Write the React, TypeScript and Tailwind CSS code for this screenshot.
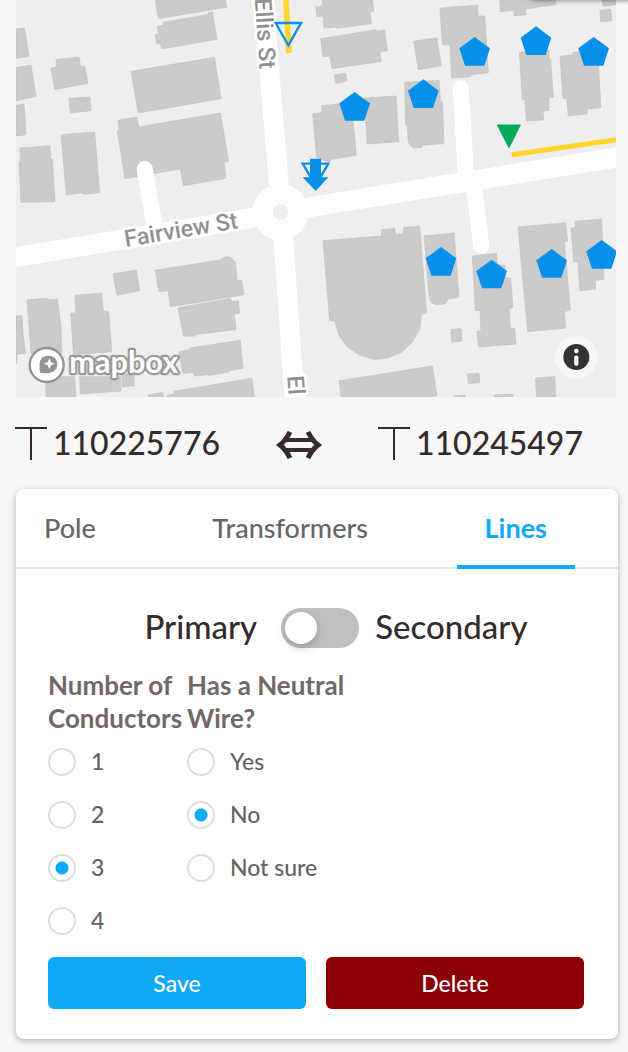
import { useState } from "react";

type Point = [number, number];

const buildings: { x: number; y: number; shapes: string[] }[] = [
  {
    x: 0,
    y: 0,
    shapes: [
      "466,0 475,56 680,22 676,0",
      "472,79 491,75 491,67 622,44 626,38 637,35 651,118 485,147 481,131 470,131 465,104 475,101",
      "393,214 644,172 663,296 415,339",
      "354,361 411,351 416,381 661,339 686,484 672,486 678,535 550,557 541,507 375,536 352,393 357,391",
      "48,87 74,84 87,169 48,175",
      "48,203 93,195 108,290 48,302",
      "48,316 72,312 78,404 48,408",
      "168,179 237,171 241,197 254,199 264,250 164,269 153,205 170,201",
      "207,295 270,291 273,332 211,339",
      "60,444 150,437 152,476 157,478 165,605 63,607 57,486 61,484",
      "183,404 284,396 299,578 252,583 245,579 199,584",
    ],
  },
  {
    x: 942,
    y: 0,
    shapes: [
      "25,0 176,0 179,34 168,37 172,71 69,85 67,81 30,84 27,48 9,50 5,20 25,18",
      "20,116 186,89 189,94 212,90 220,152 197,156 202,184 54,206 48,168 27,170",
      "61,225 95,219 99,244 66,250",
      "299,124 368,113 382,197 313,209",
      "378,24 491,15 492,48 512,48 523,218 471,225 470,230 413,234 408,134 385,134",
      "557,0 725,0 725,14 635,27 636,44 601,48 600,31 559,35",
      "864,0 906,0 906,14 868,19",
      "858,31 890,27 894,62 860,66",
      "616,157 705,150 705,177 710,178 718,292 704,294 705,331 687,334 689,360 637,363 633,300 625,298",
      "738,169 777,165 777,157 850,151 861,323 819,327 819,342 763,347 758,296 747,294",
      "-4,342 24,338 23,318 112,306 127,466 54,478 46,486 8,473",
      "152,294 246,288 254,425 159,432",
      "272,247 375,241 379,302 385,305 390,431 323,436 323,443 295,443 283,427 279,377 275,374",
    ],
  },
  {
    x: 0,
    y: 600,
    shapes: [
      "339,222 409,210 419,272 351,286",
      "466,211 660,180 675,171 690,171 706,187 711,242 725,242 732,284 511,320 504,272 476,275",
      "534,323 690,296 696,304 715,303 719,340 703,343 708,389 590,403 586,408 551,409",
      "538,454 569,449 569,444 721,421 729,505 687,512 686,517 628,526 623,524 584,528 580,517 548,520",
      "81,300 142,295 145,299 173,298 183,380 185,460 93,460",
      "225,286 305,279 310,333 326,334 335,455 221,464 212,340 228,338",
      "48,348 66,347 69,404 77,460 48,463",
      "48,463 51,463 51,490 48,492",
      "137,530 224,530 228,591 138,591",
      "239,530 361,530 363,573 241,582",
      "365,522 402,522 403,557 367,561",
      "444,585 487,577 491,591 446,591",
      "500,587 522,582 522,574 755,535 763,591 500,591",
    ],
  },
  {
    x: 942,
    y: 600,
    shapes: [
      "27,122 202,108 202,89 242,85 244,104 269,101 269,82 317,79 338,341 322,343 318,385 296,425 262,457 222,474 180,478 135,464 98,439 74,404 62,363 47,361",
      "330,108 420,99 435,293 405,296 393,311 368,315 353,308 346,296",
      "475,168 547,160 550,193 572,196 574,232 590,235 597,323 585,326 589,384 602,385 606,432 493,441 489,395 501,392 498,332 484,331",
      "612,81 755,68 761,122 751,126 769,330 751,335 755,384 641,395",
      "783,64 863,57 870,238 844,242 845,268 798,272 792,187 779,184 771,85 784,82",
      "411,388 441,386 444,423 413,426",
      "461,522 495,519 497,547 463,551",
      "76,542 355,498 369,587 340,591 81,591",
      "664,534 722,530 725,591 668,591",
      "420,588 453,585 453,591 420,591",
      "541,585 596,582 598,591 541,591",
    ],
  },
];

const homes: Point[] = [
  [1064, 276],
  [1270, 238],
  [1424, 111],
  [1608, 79],
  [1781, 111],
  [1323, 741],
  [1475, 779],
  [1655, 747],
  [1805, 720],
];

function StreetMap() {
  return (
    <svg
      viewBox="48 0 1800 1191"
      className="block h-auto w-full bg-[#eeeeee]"
      role="img"
      aria-label="Map of Ellis St and Fairview St"
    >
      <g fill="#cbcbcb" stroke="#c1c1c1" strokeWidth="2">
        {buildings.map((group) => (
          <g key={`${group.x}-${group.y}`} transform={`translate(${group.x} ${group.y})`}>
            {group.shapes.map((points) => (
              <polygon key={points} points={points} />
            ))}
          </g>
        ))}
      </g>

      <g fill="none" stroke="#ffffff" strokeLinejoin="round">
        <path d="M790 -10 L807 200 L850 715 L884 1200" strokeWidth="59" />
        <path d="M38 773 L840 640 L942 619 L1858 471" strokeWidth="60" />
        <path d="M434 507 L466 690" strokeWidth="48" strokeLinecap="round" />
        <path d="M1382 264 L1398 530 L1424 575 L1444 738" strokeWidth="48" strokeLinecap="round" />
      </g>
      <circle cx="841" cy="636" r="84" fill="#ffffff" />
      <circle cx="841" cy="636" r="23" fill="#eeeeee" />

      <g
        className="font-[Roboto,sans-serif] font-medium"
        fill="#919191"
        stroke="#ffffff"
        strokeWidth="16"
        strokeLinejoin="round"
        paintOrder="stroke"
        fontSize="70"
      >
        <text transform="translate(779 208) rotate(86)" textAnchor="end">
          Ellis St
        </text>
        <text transform="translate(377 741) rotate(-9.5)">Fairview St</text>
        <text transform="translate(862 1128) rotate(86)">El</text>
      </g>

      <g fill="none" stroke="#ffd52e">
        <path d="M857 -5 L867 159" strokeWidth="17" />
        <path d="M1535 464 L1858 418" strokeWidth="15" />
      </g>

      <polygon points="827,69 903,69 865,136" fill="none" stroke="#0790ea" strokeWidth="7" />
      <polygon points="908,491 985,491 947,557" fill="none" stroke="#0790ea" strokeWidth="7" />
      <polygon points="930,476 963,476 963,532 985,532 947,573 908,532 930,532" fill="#0790ea" />
      <polygon
        points="1492,375 1561,375 1527,443"
        fill="#04aa5b"
        stroke="#04aa5b"
        strokeWidth="3"
        strokeLinejoin="round"
      />
      {homes.map(([x, y]) => (
        <polygon
          key={`${x}-${y}`}
          transform={`translate(${x} ${y})`}
          points="0,0 46,34 29,86 -29,86 -46,34"
          fill="#0790ea"
        />
      ))}

      <circle cx="140" cy="1095" r="51" fill="#ffffff" stroke="#929292" strokeWidth="7" />
      <path
        d="M121 1119 C114 1089 120 1068 143 1067 C160 1067 172 1077 172 1093 C171 1116 149 1123 121 1119 Z"
        fill="#949494"
      />
      <path d="M148 1075 L153 1086 L164 1091 L153 1096 L148 1107 L143 1096 L132 1091 L143 1086 Z" fill="#ffffff" />
      <text
        x="208"
        y="1119"
        className="font-[Lato,sans-serif] font-bold"
        fontSize="92"
        fill="#ffffff"
        stroke="#999999"
        strokeWidth="13"
        strokeLinejoin="round"
        paintOrder="stroke"
      >
        mapbox
      </text>

      <circle cx="1729" cy="1072" r="64" fill="#f7f7f7" />
      <circle cx="1729" cy="1071" r="39" fill="#333333" />
      <circle cx="1729" cy="1053" r="7" fill="#f7f7f7" />
      <path d="M1729 1073 V1091" stroke="#f7f7f7" strokeWidth="13" strokeLinecap="round" />
    </svg>
  );
}

function PoleNumber({ value }: { value: string }) {
  return (
    <div className="flex items-center gap-[6px]">
      <svg viewBox="0 0 32 34" className="h-[34px] w-8" fill="none" stroke="#352b2b" aria-hidden="true">
        <path d="M0 2 H32" strokeWidth="2" />
        <path d="M16 2 V34" strokeWidth="2" />
      </svg>
      <span className="text-[32px] leading-9 font-medium">{value}</span>
    </div>
  );
}

interface ChoiceProps {
  legend: [string, string];
  name: string;
  options: string[];
  value: string;
  onChange: (value: string) => void;
}

function Choice({ legend, name, options, value, onChange }: ChoiceProps) {
  return (
    <fieldset className="w-[139px]">
      <legend className="text-[26px] leading-[33px] font-bold whitespace-nowrap text-[#726868]">
        {legend[0]}
        <br />
        {legend[1]}
      </legend>
      {options.map((option) => (
        <label
          key={option}
          className="flex h-[53px] items-center gap-[15px] text-[23px] font-medium whitespace-nowrap text-[#636363]"
        >
          <input
            type="radio"
            name={name}
            checked={value === option}
            onChange={() => onChange(option)}
            className="size-7 appearance-none rounded-full border-2 border-[#dedede] bg-white bg-[radial-gradient(circle,#0fa9fa_6px,transparent_7px)] bg-size-[0px] bg-center bg-no-repeat checked:bg-size-[24px]"
          />
          {option}
        </label>
      ))}
    </fieldset>
  );
}

const tabs = ["Pole", "Transformers", "Lines"];

export default function App() {
  const [tab, setTab] = useState("Lines");
  const [secondary, setSecondary] = useState(false);
  const [conductors, setConductors] = useState("3");
  const [neutral, setNeutral] = useState("No");

  return (
    <div className="relative min-h-screen overflow-hidden bg-[#f7f7f7] font-[Lato,sans-serif] text-[#352b2b]">
      <div className="absolute -top-3 -right-2 h-3 w-[106px] rounded-lg bg-white shadow-[0_0_4px_1px_rgba(60,55,80,0.5)]" />
      <div className="pr-3 pl-4">
        <StreetMap />
      </div>

      <div className="flex h-[92px] items-center justify-between pr-[45px] pl-[15px]">
        <PoleNumber value="110225776" />
        <svg
          viewBox="0 0 46 28"
          className="mt-1 h-7 w-[46px]"
          fill="none"
          stroke="#352b2b"
          strokeWidth="5"
          role="img"
          aria-label="connected to"
        >
          <path d="M8 9 H38 M8 19 H38" strokeWidth="4" />
          <path d="M14 1 C11 7 8 11 4 14 C8 17 11 21 14 27 M32 1 C35 7 38 11 42 14 C38 17 35 21 32 27" />
        </svg>
        <PoleNumber value="110245497" />
      </div>

      <main className="mr-[10px] mb-3 ml-4 rounded-lg bg-white shadow-[0_2px_6px_rgba(0,0,0,0.28)]">
        <div role="tablist" className="flex h-20 justify-between border-b-2 border-[#e5e5e5] pr-[43px]">
          {tabs.map((name) => (
            <button
              key={name}
              type="button"
              role="tab"
              aria-selected={tab === name}
              onClick={() => setTab(name)}
              className="-mb-[2px] border-b-4 border-transparent px-7 pt-[2px] text-[27px] font-medium text-[#666666] aria-selected:border-[#0fa9fa] aria-selected:font-bold aria-selected:text-[#0fa9fa]"
            >
              {name}
            </button>
          ))}
        </div>

        <div className="pt-[39px] pr-[34px] pb-[30px] pl-8">
          <label className="flex h-10 items-center justify-center pl-10 text-[33px] leading-9 font-medium">
            <span className="pb-1">Primary</span>
            <input
              type="checkbox"
              role="switch"
              checked={secondary}
              onChange={(event) => setSecondary(event.target.checked)}
              className="mr-4 ml-6 flex h-10 w-[78px] appearance-none items-center rounded-full bg-[#bfbfbf] px-1 before:size-8 before:rounded-full before:bg-white before:shadow-[0_4px_8px_rgba(0,35,11,0.2)] checked:justify-end checked:bg-[#0fa9fa]"
            />
            <span className="pb-1">Secondary</span>
          </label>

          <div className="mt-[21px] flex">
            <Choice
              legend={["Number of", "Conductors"]}
              name="conductors"
              options={["1", "2", "3", "4"]}
              value={conductors}
              onChange={setConductors}
            />
            <Choice
              legend={["Has a Neutral", "Wire?"]}
              name="neutral"
              options={["Yes", "No", "Not sure"]}
              value={neutral}
              onChange={setNeutral}
            />
          </div>

          <div className="mt-[10px] grid grid-cols-2 gap-5 text-[23px] font-medium text-white">
            <button type="button" className="h-[52px] rounded-md bg-[#0fa9fa]">
              Save
            </button>
            <button type="button" className="h-[52px] rounded-md bg-[#8b0003]">
              Delete
            </button>
          </div>
        </div>
      </main>
    </div>
  );
}
